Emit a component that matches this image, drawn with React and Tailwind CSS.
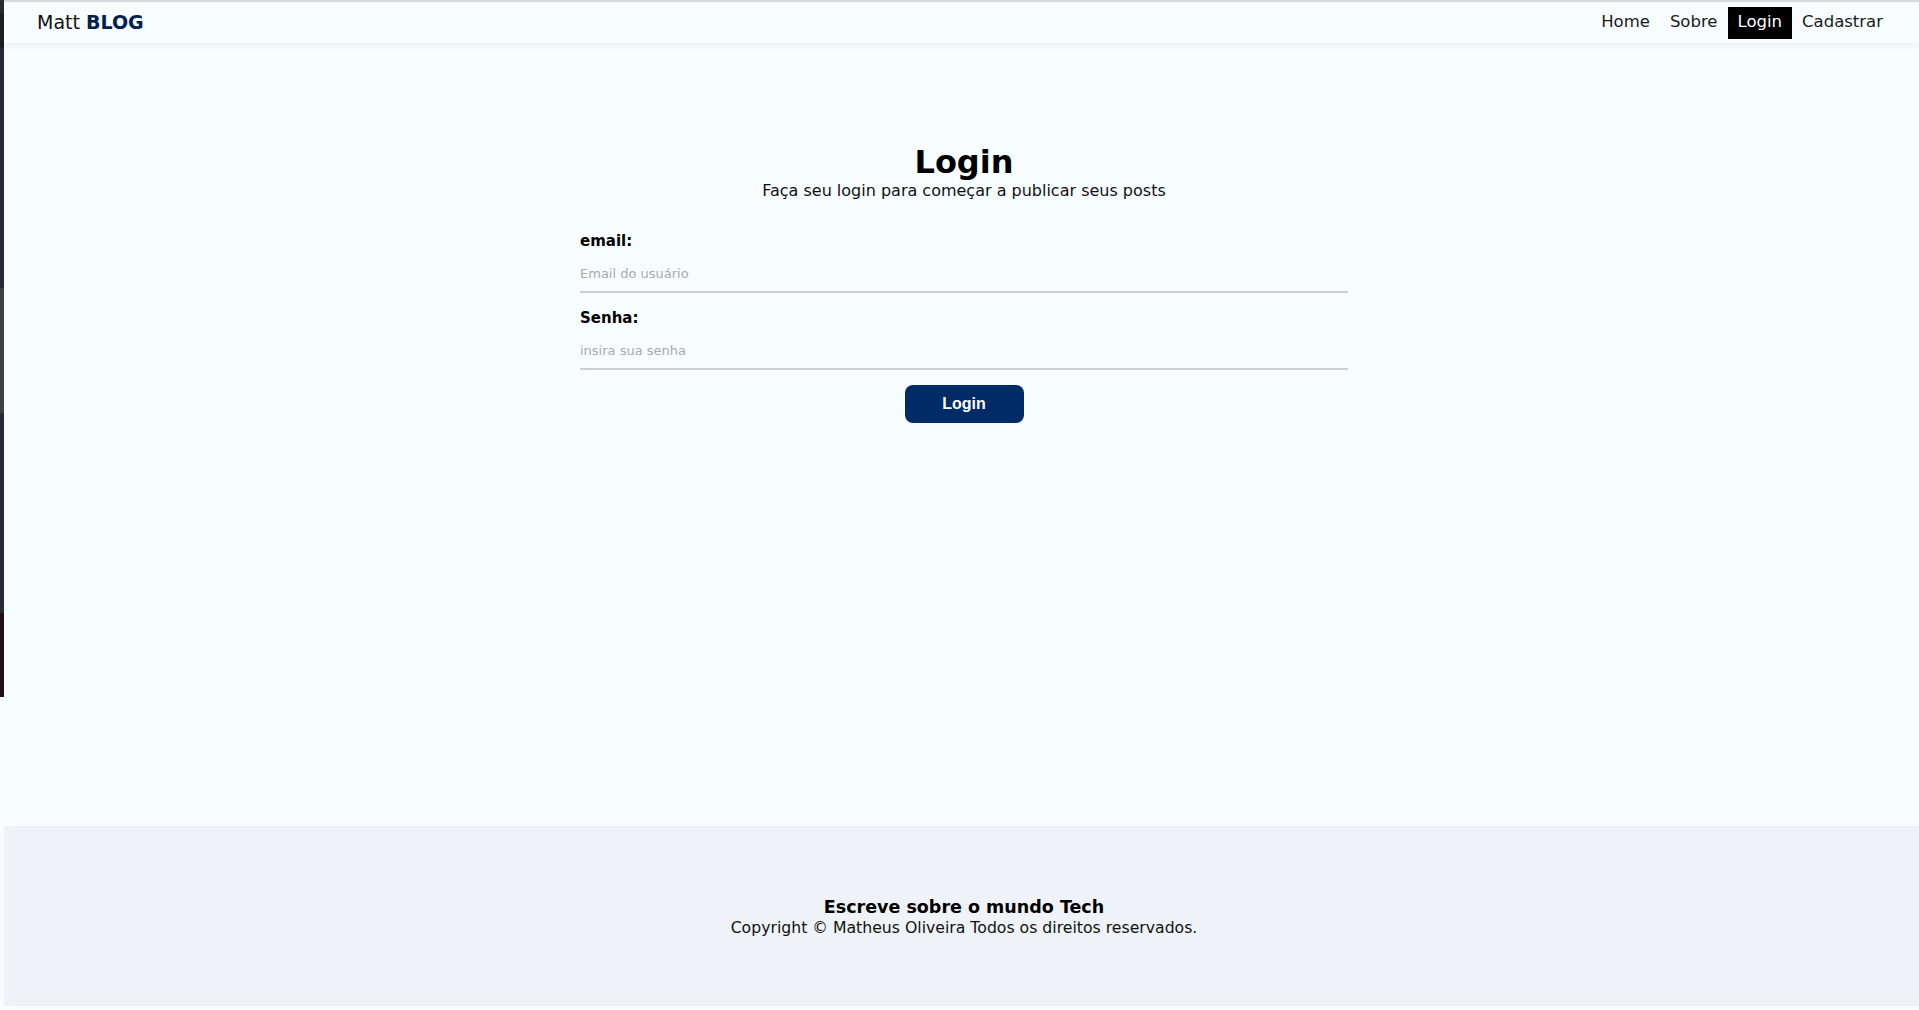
export default function App() {
  const font = { fontFamily: '"DejaVu Sans", "Open Sans", sans-serif' };

  return (
    <div className="flex min-h-[1010px] w-full bg-[#f7fcff]" style={font}>
      {/* janela de trás (borda escura) */}
      <div className="flex w-[4px] shrink-0 flex-col self-start">
        <div className="h-[13px] bg-[#2b2b2b]"></div>
        <div className="h-[35px] bg-[#1d1f24]"></div>
        <div className="h-[240px] bg-[#272a36]"></div>
        <div className="h-[125px] bg-[#3f3f44]"></div>
        <div className="h-[200px] bg-[#272a36]"></div>
        <div className="h-[84px] bg-[#1a1016]"></div>
      </div>

      <div className="flex min-w-0 flex-1 flex-col">
        {/* Navbar */}
        <nav className="flex h-[43px] items-center justify-between border-t-2 border-[#d8d8d8] bg-[#f7fcff] pl-[33px] pr-[26px] shadow-[0_2px_6px_rgba(0,0,0,0.06)]">
          <a className="text-[19px] text-[#111]">
            Matt <span className="font-bold text-[#00214f]">BLOG</span>
          </a>
          <ul className="flex items-center">
            <li>
              <a className="flex h-[32px] items-center px-[10px] text-[16.5px] text-[#1a1a1a]">Home</a>
            </li>
            <li>
              <a className="flex h-[32px] items-center px-[10px] text-[16.5px] text-[#1a1a1a]">Sobre</a>
            </li>
            <li>
              <a className="flex h-[32px] items-center bg-black px-[10px] text-[16.5px] text-white">Login</a>
            </li>
            <li>
              <a className="flex h-[32px] items-center px-[10px] text-[16.5px] text-[#1a1a1a]">Cadastrar</a>
            </li>
          </ul>
        </nav>

        {/* Conteúdo */}
        <main className="flex flex-1 flex-col items-center pl-[5px] pt-[101px]">
          <h1 className="text-[32px] font-bold leading-[36px] text-black">Login</h1>
          <p className="text-[16px] leading-[22px] text-[#111]">
            Faça seu login para começar a publicar seus posts
          </p>

          <form className="mt-[29px] flex w-[768px] flex-col">
            <label className="flex flex-col">
              <span className="text-[15px] font-bold leading-[20px] text-black">email:</span>
              <input
                type="email"
                placeholder="Email do usuário"
                className="mt-[2px] h-[40px] border-b-2 border-[#cfcfcf] bg-transparent pt-[3px] text-[13px] text-[#222] outline-none placeholder:text-[#aaaaaa]"
              />
            </label>
            <label className="mt-[15px] flex flex-col">
              <span className="text-[15px] font-bold leading-[20px] text-black">Senha:</span>
              <input
                type="password"
                placeholder="insira sua senha"
                className="mt-[2px] h-[40px] border-b-2 border-[#cfcfcf] bg-transparent pt-[3px] text-[13px] text-[#222] outline-none placeholder:text-[#aaaaaa]"
              />
            </label>
            <button
              type="button"
              className="mx-auto mt-[15px] h-[38px] w-[119px] rounded-[8px] bg-[#002b66] text-[16px] font-bold text-white"
              style={{ fontFamily: '"Liberation Sans", Arial, sans-serif' }}
            >
              Login
            </button>
          </form>
        </main>

        {/* Footer */}
        <footer className="flex h-[180px] flex-col items-center justify-center bg-[#eff3f7] pl-[5px] pt-[2px]">
          <h3 className="text-[17.5px] font-bold leading-[22px] text-black">Escreve sobre o mundo Tech</h3>
          <p className="text-[15.7px] leading-[20px] text-[#111]">
            Copyright © Matheus Oliveira Todos os direitos reservados.
          </p>
        </footer>
        <div className="h-[4px] bg-[#f7fcff]"></div>
      </div>
    </div>
  );
}
